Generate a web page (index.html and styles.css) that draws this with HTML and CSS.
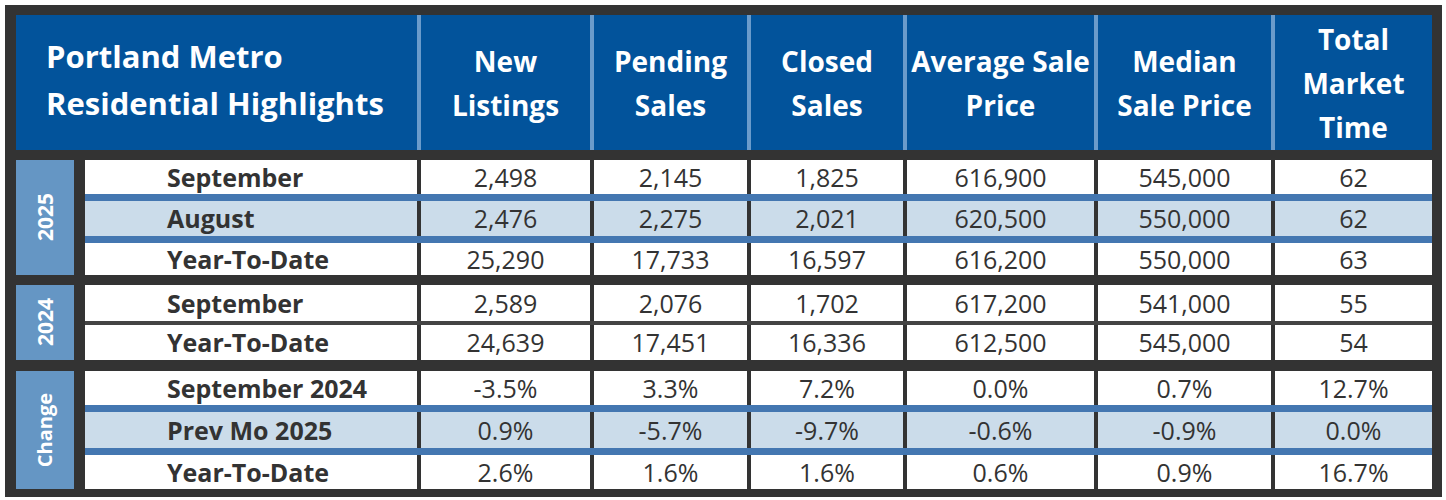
FILE: index.html
```html
<!DOCTYPE html>
<html lang="en">
<head>
<meta charset="utf-8">
<title>Portland Metro Residential Highlights</title>
<link rel="stylesheet" href="styles.css">
</head>
<body>
<div class="frame">
  <div class="head">
    <div class="hcell title">Portland Metro<br>Residential Highlights</div>
    <div class="hcell">New<br>Listings</div>
    <div class="hcell">Pending<br>Sales</div>
    <div class="hcell">Closed<br>Sales</div>
    <div class="hcell">Average Sale<br>Price</div>
    <div class="hcell">Median<br>Sale Price</div>
    <div class="hcell">Total<br>Market<br>Time</div>
  </div>

  <div class="group g2025 blue-lines">
    <div class="year"><span>2025</span></div>
    <div class="rows">
      <div class="row r34"><div class="lab">September</div><div>2,498</div><div>2,145</div><div>1,825</div><div>616,900</div><div>545,000</div><div>62</div></div>
      <div class="row r35 tint"><div class="lab">August</div><div>2,476</div><div>2,275</div><div>2,021</div><div>620,500</div><div>550,000</div><div>62</div></div>
      <div class="row r32"><div class="lab">Year-To-Date</div><div>25,290</div><div>17,733</div><div>16,597</div><div>616,200</div><div>550,000</div><div>63</div></div>
    </div>
  </div>

  <div class="group g2024 dark-lines">
    <div class="year"><span>2024</span></div>
    <div class="rows">
      <div class="row r36"><div class="lab">September</div><div>2,589</div><div>2,076</div><div>1,702</div><div>617,200</div><div>541,000</div><div>55</div></div>
      <div class="row r35"><div class="lab">Year-To-Date</div><div>24,639</div><div>17,451</div><div>16,336</div><div>612,500</div><div>545,000</div><div>54</div></div>
    </div>
  </div>

  <div class="group gchange blue-lines">
    <div class="year"><span>Change</span></div>
    <div class="rows">
      <div class="row r34"><div class="lab">September 2024</div><div>-3.5%</div><div>3.3%</div><div>7.2%</div><div>0.0%</div><div>0.7%</div><div>12.7%</div></div>
      <div class="row r36 tint"><div class="lab">Prev Mo 2025</div><div>0.9%</div><div>-5.7%</div><div>-9.7%</div><div>-0.6%</div><div>-0.9%</div><div>0.0%</div></div>
      <div class="row r34"><div class="lab">Year-To-Date</div><div>2.6%</div><div>1.6%</div><div>1.6%</div><div>0.6%</div><div>0.9%</div><div>16.7%</div></div>
    </div>
  </div>
</div>
</body>
</html>
```

FILE: styles.css
```css
* { box-sizing: border-box; }

html, body {
  margin: 0;
  padding: 0;
  background: #ffffff;
}

body {
  font-family: "Open Sans", "Noto Sans", "Liberation Sans", sans-serif;
  color: #333333;
}

.frame {
  margin: 5px 0 0 5px;
  width: 1437px;
  background: #333333;
  padding: 10px 10px 8px 11px;
}

.head {
  display: grid;
  grid-template-columns: 401px 169px 153px 152px 187px 173px 157px;
  column-gap: 4px;
  background: #6a9bcb;
  height: 135px;
}

.hcell {
  background: #02539b;
  color: #ffffff;
  font-weight: 700;
  font-size: 28px;
  line-height: 44px;
  display: flex;
  align-items: center;
  justify-content: center;
  text-align: center;
}

.hcell.title {
  justify-content: flex-start;
  text-align: left;
  padding: 0 0 6px 30px;
  font-size: 31px;
  line-height: 47px;
}

.group {
  display: flex;
  column-gap: 11px;
  margin-top: 10px;
}

.gchange { margin-top: 11px; }

.year {
  width: 58px;
  background: #6596c4;
  color: #ffffff;
  font-weight: 700;
  font-size: 21px;
  display: flex;
  align-items: center;
  justify-content: center;
}

.year span {
  writing-mode: vertical-rl;
  transform: rotate(180deg);
  line-height: 1;
}

.gchange .year { font-size: 20px; }

.rows {
  width: 1347px;
  display: flex;
  flex-direction: column;
}

.row {
  display: grid;
  grid-template-columns: 332px 169px 153px 152px 187px 173px 157px;
  column-gap: 4px;
  background: #333333;
}

.row > div {
  background: #ffffff;
  font-size: 25px;
  text-align: center;
  display: flex;
  align-items: center;
  justify-content: center;
  line-height: 1;
}

.row > div.lab {
  font-weight: 700;
  justify-content: flex-start;
  padding-left: 82px;
}

.row.tint > div { background: #cbdcea; }

.r32 { height: 32px; }
.r34 { height: 34px; }
.r35 { height: 35px; }
.r36 { height: 36px; }

.blue-lines .row + .row { border-top: 7px solid #4477b1; box-sizing: content-box; }
.dark-lines .row + .row { border-top: 4px solid #444444; box-sizing: content-box; }
```
